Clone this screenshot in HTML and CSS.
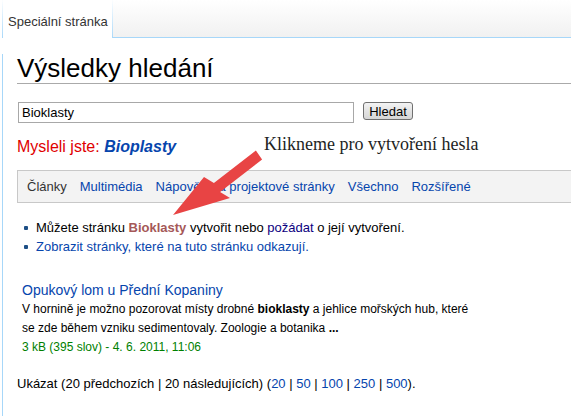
FILE: index.html
```html
<!DOCTYPE html>
<html lang="cs">
<head>
<meta charset="utf-8">
<title>Výsledky hledání</title>
<link rel="stylesheet" href="styles.css">
</head>
<body>
<div class="top">
  <div class="tab">Speciální stránka</div>
  <div class="filler"></div>
</div>
<div class="content">
  <h1 class="title">Výsledky hledání</h1>
  <form class="search">
    <input class="query" type="text" value="Bioklasty">
    <button class="go" type="button">Hledat</button>
  </form>
  <div class="didyoumean">Mysleli jste: <a class="suggest" href="#">Bioplasty</a></div>
  <div class="filters">
    <span class="filter active">Články</span>
    <a class="filter" href="#">Multimédia</a>
    <a class="filter" href="#">Nápověda a projektové stránky</a>
    <a class="filter" href="#">Všechno</a>
    <a class="filter" href="#">Rozšířené</a>
  </div>
  <ul class="info">
    <li>Můžete stránku <a class="new" href="#">Bioklasty</a> vytvořit nebo <a class="visited" href="#">požádat</a> o její vytvoření.</li>
    <li><a class="link" href="#">Zobrazit stránky, které na tuto stránku odkazují.</a></li>
  </ul>
  <div class="result">
    <a class="result-title" href="#">Opukový lom u Přední Kopaniny</a>
    <div class="snippet">V hornině je možno pozorovat místy drobné <b>bioklasty</b> a jehlice mořských hub, které<br>se zde během vzniku sedimentovaly. Zoologie a botanika <b>...</b></div>
    <div class="meta">3 kB (395 slov) - 4. 6. 2011, 11:06</div>
  </div>
  <div class="paging">Ukázat (20 předchozích | 20 následujících) (<a class="link" href="#">20</a> | <a class="link" href="#">50</a> | <a class="link" href="#">100</a> | <a class="link" href="#">250</a> | <a class="link" href="#">500</a>).</div>
</div>
<div class="note">Klikneme pro vytvoření hesla</div>
<svg class="arrow" width="571" height="416" viewBox="0 0 571 416">
  <polygon points="255.9,150.5 262.1,159.5 220.1,192 230,198 173,215 204,177 213.9,183" fill="#e84444"/>
</svg>
</body>
</html>
```
FILE: styles.css
```css
html, body {
  margin: 0;
  padding: 0;
  overflow: hidden;
}
body {
  font-family: "Liberation Sans", Arial, sans-serif;
  color: #000;
  background: #fff;
  position: relative;
  height: 416px;
}
a {
  text-decoration: none;
}
.top {
  display: flex;
  height: 38px;
}
.tab {
  margin-left: 2px;
  width: 104px;
  padding-left: 5px;
  border-left: 1px solid #a7d7f9;
  border-right: 1px solid #a7d7f9;
  border-image: linear-gradient(#ffffff, #a7d7f9) 1;
  background: #fff;
  font-size: 13px;
  line-height: 20px;
  padding-top: 12px;
  color: #333;
  box-sizing: content-box;
}
.filler {
  flex: 1;
  background: linear-gradient(#ffffff, #f1f1f1);
  border-bottom: 1px solid #a7d7f9;
}
.content {
  margin-left: 2px;
  border-left: 1px solid #a7d7f9;
  padding-left: 14px;
  height: 378px;
}
.title {
  margin: 16px 0 0 0;
  font-weight: normal;
  font-size: 26px;
  line-height: 29px;
  border-bottom: 1px solid #aaa;
}
.search {
  display: flex;
  align-items: flex-start;
  margin: 18px 0 0 1px;
}
.query {
  box-sizing: border-box;
  width: 336px;
  height: 21px;
  margin: 0;
  padding: 0 0 0 3px;
  border: 1px solid #a8a8a8;
  font-family: "Liberation Sans", Arial, sans-serif;
  font-size: 13px;
  color: #000;
}
.go {
  box-sizing: border-box;
  margin: 0 0 0 9px;
  width: 50px;
  height: 18px;
  padding: 0;
  border: 1px solid #707070;
  border-radius: 3px;
  background: linear-gradient(#f3f3f3, #e3e3e3 50%, #d6d6d6);
  font-family: "Liberation Sans", Arial, sans-serif;
  font-size: 13px;
  line-height: 15px;
  color: #000;
}
.didyoumean {
  margin-top: 14px;
  font-size: 16px;
  line-height: 20px;
  color: #e00000;
}
.suggest {
  color: #0645ad;
  font-weight: bold;
  font-style: italic;
}
.filters {
  margin-top: 13px;
  height: 31px;
  border: 1px solid #c8c8c8;
  border-right: none;
  background: #f3f3f3;
  padding-left: 9px;
  display: flex;
  gap: 13px;
  font-size: 13px;
  line-height: 31px;
}
.filter {
  color: #0645ad;
}
.filter.active {
  color: #333;
}
.info {
  list-style: none;
  margin: 15px 0 0 0;
  padding: 0 0 0 19px;
  font-size: 13px;
  line-height: 19px;
}
.info li {
  position: relative;
}
.info li::before {
  content: "";
  position: absolute;
  left: -12px;
  top: 8px;
  width: 4px;
  height: 4px;
  border-radius: 1px;
  background: #1d4f86;
}
.new {
  color: #a55858;
  font-weight: bold;
}
.visited {
  color: #0b0080;
}
.link {
  color: #0645ad;
}
.result {
  margin: 25px 0 0 5px;
}
.result-title {
  display: block;
  font-size: 14px;
  line-height: 19px;
  color: #0645ad;
}
.snippet {
  font-size: 12px;
  line-height: 19px;
  color: #000;
}
.meta {
  font-size: 12px;
  line-height: 18px;
  color: #008000;
}
.paging {
  margin-top: 18px;
  font-size: 13px;
  line-height: 19px;
}
.note {
  position: absolute;
  left: 264px;
  top: 134px;
  font-family: "Liberation Serif", "Times New Roman", serif;
  font-size: 18px;
  line-height: 20px;
  color: #231f1f;
  white-space: nowrap;
}
.arrow {
  position: absolute;
  left: 0;
  top: 0;
  pointer-events: none;
}
```
